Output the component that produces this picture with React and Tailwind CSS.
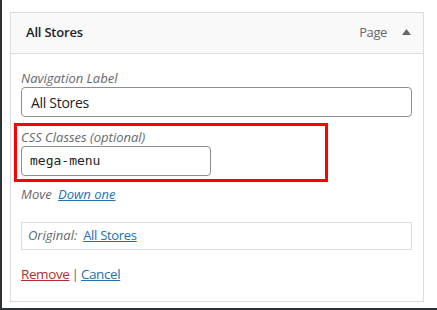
import React from 'react'

const font = { fontFamily: '"Open Sans", "Noto Sans", sans-serif' }

export default function App() {
  return (
    <div className="w-[437px] h-[310px] bg-white border-l-2 border-b-2 border-[#2c3338] overflow-hidden" style={font}>
      <div className="ml-[8px] mt-[12px] w-[414px] border border-[#dcdcde]">
        {/* Header */}
        <div className="h-[41px] bg-[#f9f9f9] border-b border-[#dcdcde] flex items-center pl-[15px] pr-[12px]">
          <span className="text-[13px] font-semibold text-[#1d2327] tracking-[-0.2px]">All Stores</span>
          <span className="ml-auto text-[13px] text-[#646970] tracking-[-0.4px]">Page</span>
          <svg width="9" height="6" viewBox="0 0 9 6" className="ml-[15px] mb-[3px]">
            <path d="M4.5 0 L9 6 L0 6 Z" fill="#646970" />
          </svg>
        </div>

        {/* Body */}
        <div className="pl-[10px] pr-[11px] pt-[15px] pb-[18px] text-[13px] text-[#1d2327]">
          <label className="block italic text-[#646970] leading-[18px]">Navigation Label</label>
          <div className="h-[30px] w-full border border-[#8c8f94] rounded-[4px] flex items-center px-[9px] text-[14px] tracking-[-0.3px]">
            All Stores
          </div>

          <div className="mt-[6px] -ml-[7px] w-[314px] border-[3px] border-[#ff0000] pl-[4px] pt-[2px] pb-[3px]">
            <label className="block italic text-[#646970] leading-[18px]">CSS Classes (optional)</label>
            <div className="h-[30px] w-[190px] border border-[#8c8f94] rounded-[4px] flex items-center px-[8px] text-[13px]" style={{ fontFamily: '"DejaVu Sans Mono", "Liberation Mono", monospace' }}>
              mega-menu
            </div>
          </div>

          <div className="mt-[3px] leading-[18px] italic text-[#646970]">
            Move <a href="#" className="ml-[3px] text-[#2271b1] underline">Down one</a>
          </div>

          <div className="mt-[19px] h-[28px] border border-[#dcdcde] flex items-center px-[6px]">
            <span className="italic text-[#646970]">Original:</span>
            <a href="#" className="ml-[6px] text-[#2271b1] underline tracking-[-0.3px]">All Stores</a>
          </div>

          <div className="mt-[15px] leading-[18px] text-[13.5px]">
            <a href="#" className="text-[#b32d2e] underline tracking-[-0.4px]">Remove</a>
            <span className="text-[#646970] mx-[2px]">|</span>
            <a href="#" className="text-[#2271b1] underline tracking-[-0.4px]">Cancel</a>
          </div>
        </div>
      </div>
    </div>
  )
}
